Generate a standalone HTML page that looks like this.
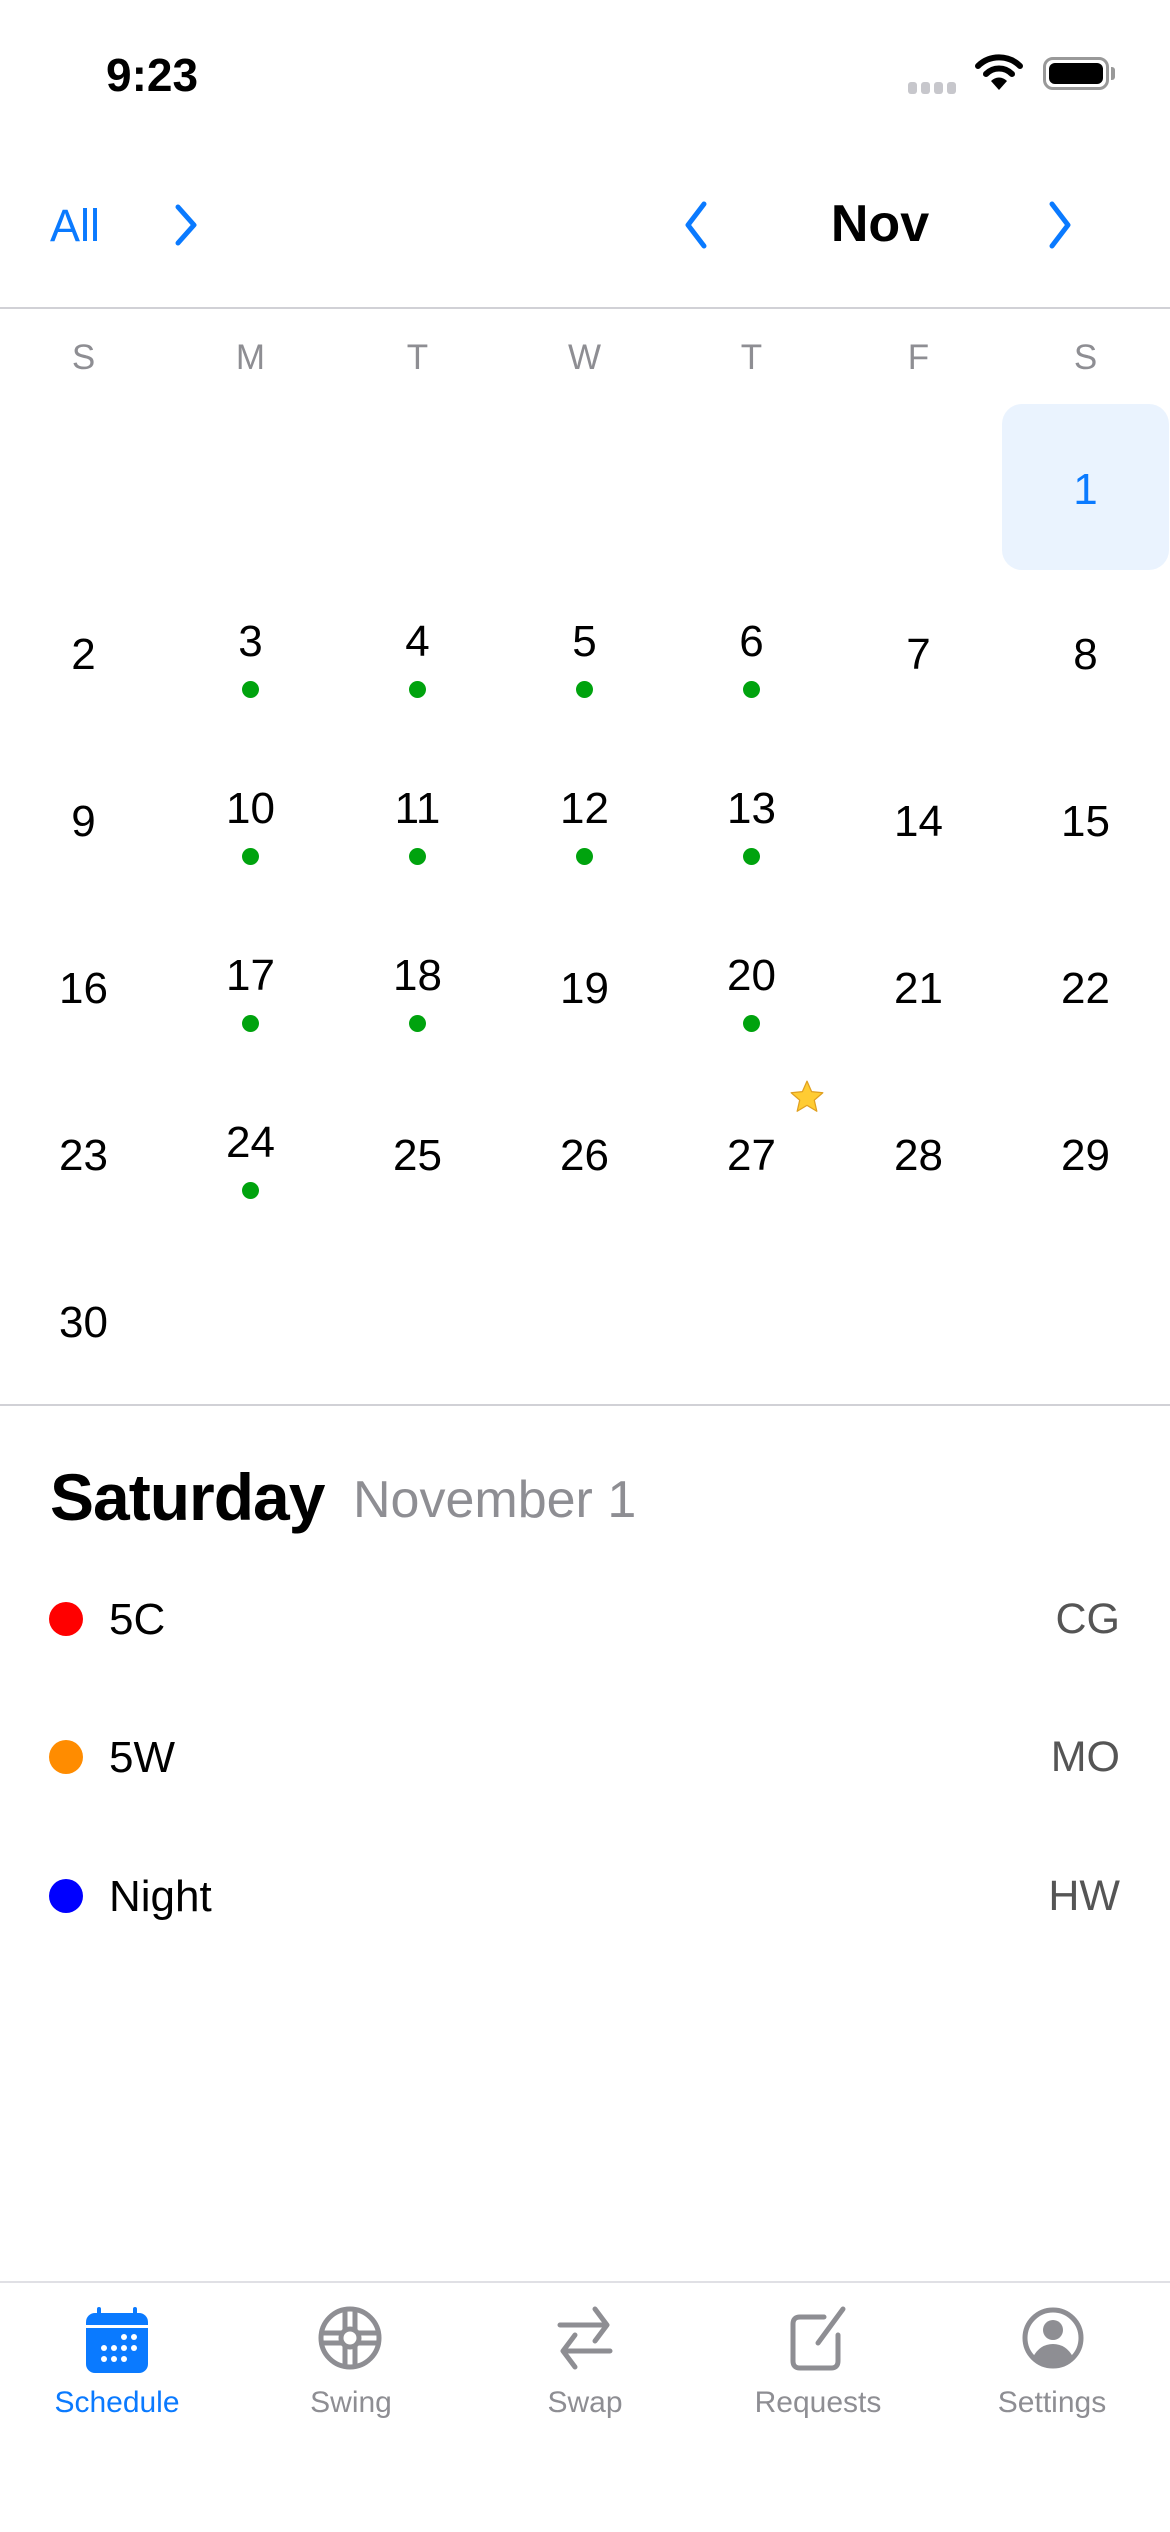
<!DOCTYPE html>
<html><head><meta charset="utf-8"><style>
*{margin:0;padding:0;box-sizing:border-box}
body{width:1170px;height:2532px;background:#fff;position:relative;overflow:hidden;font-family:"Liberation Sans",sans-serif;color:#000}
.a{position:absolute}
.n{position:absolute;width:167px;height:56px;line-height:56px;text-align:center;font-size:44px;margin-top:3px}
.d{position:absolute;width:17px;height:17px;border-radius:50%;background:#00a30e}
.w{position:absolute;width:167px;text-align:center;font-size:35px;color:#8e8e93;top:338px}
.tl{position:absolute;width:234px;text-align:center;font-size:30px;color:#8e8e93;top:2386px}
</style></head><body>
<div class="a" style="left:106px;top:48px;font-size:46px;font-weight:bold;">9:23</div>
<div class="a" style="left:908px;top:82px;display:flex;gap:4px">
<span style="width:9px;height:12px;background:#c7c7cc;border-radius:3px"></span><span style="width:9px;height:12px;background:#c7c7cc;border-radius:3px"></span><span style="width:9px;height:12px;background:#c7c7cc;border-radius:3px"></span><span style="width:9px;height:12px;background:#c7c7cc;border-radius:3px"></span></div>
<svg class="a" style="left:974px;top:52px" width="50" height="40" viewBox="0 0 50 40"><path d="M4 14 A30 30 0 0 1 46 14" stroke="#000" stroke-width="6" fill="none" stroke-linecap="round"/><path d="M12 22 A18 18 0 0 1 38 22" stroke="#000" stroke-width="6" fill="none" stroke-linecap="round"/><path d="M25 38 L17 29 A11 11 0 0 1 33 29 Z" fill="#000"/></svg>
<div class="a" style="left:1043px;top:57px;width:66px;height:33px;border:3px solid #999;border-radius:10px;padding:3px"><div style="width:100%;height:100%;background:#000;border-radius:6px"></div></div>
<div class="a" style="left:1111px;top:67px;width:4px;height:13px;background:#999;border-radius:0 3px 3px 0"></div>

<div class="a" style="left:50px;top:200px;font-size:45px;color:#0a7aff">All</div>
<svg class="a" style="left:172px;top:203px" width="30" height="44" viewBox="0 0 30 44"><path d="M6 4 L22 22 L6 40" stroke="#0a7aff" stroke-width="5" fill="none" stroke-linecap="round" stroke-linejoin="round"/></svg>
<svg class="a" style="left:680px;top:200px" width="30" height="50" viewBox="0 0 30 50"><path d="M24 4 L8 25 L24 46" stroke="#0a7aff" stroke-width="5" fill="none" stroke-linecap="round" stroke-linejoin="round"/></svg>
<div class="a" style="left:780px;width:200px;text-align:center;top:194px;font-size:52px;font-weight:bold">Nov</div>
<svg class="a" style="left:1046px;top:200px" width="30" height="50" viewBox="0 0 30 50"><path d="M6 4 L22 25 L6 46" stroke="#0a7aff" stroke-width="5" fill="none" stroke-linecap="round" stroke-linejoin="round"/></svg>
<div class="a" style="left:0;top:307px;width:1170px;height:2px;background:#d1d1d6"></div>

<div class="w" style="left:0">S</div><div class="w" style="left:167px">M</div><div class="w" style="left:334px">T</div><div class="w" style="left:501px">W</div><div class="w" style="left:668px">T</div><div class="w" style="left:835px">F</div><div class="w" style="left:1002px">S</div>

<div class="a" style="left:1002px;top:404px;width:167px;height:166px;background:#eaf3fe;border-radius:20px"></div>
<div class="n" style="left:1002px;top:459px;color:#0a7aff">1</div>

<div class="n" style="left:0;top:624px">2</div>
<div class="n" style="left:167px;top:611px">3</div><div class="d" style="left:242px;top:681px"></div>
<div class="n" style="left:334px;top:611px">4</div><div class="d" style="left:409px;top:681px"></div>
<div class="n" style="left:501px;top:611px">5</div><div class="d" style="left:576px;top:681px"></div>
<div class="n" style="left:668px;top:611px">6</div><div class="d" style="left:743px;top:681px"></div>
<div class="n" style="left:835px;top:624px">7</div>
<div class="n" style="left:1002px;top:624px">8</div>

<div class="n" style="left:0;top:791px">9</div>
<div class="n" style="left:167px;top:778px">10</div><div class="d" style="left:242px;top:848px"></div>
<div class="n" style="left:334px;top:778px">11</div><div class="d" style="left:409px;top:848px"></div>
<div class="n" style="left:501px;top:778px">12</div><div class="d" style="left:576px;top:848px"></div>
<div class="n" style="left:668px;top:778px">13</div><div class="d" style="left:743px;top:848px"></div>
<div class="n" style="left:835px;top:791px">14</div>
<div class="n" style="left:1002px;top:791px">15</div>

<div class="n" style="left:0;top:958px">16</div>
<div class="n" style="left:167px;top:945px">17</div><div class="d" style="left:242px;top:1015px"></div>
<div class="n" style="left:334px;top:945px">18</div><div class="d" style="left:409px;top:1015px"></div>
<div class="n" style="left:501px;top:958px">19</div>
<div class="n" style="left:668px;top:945px">20</div><div class="d" style="left:743px;top:1015px"></div>
<div class="n" style="left:835px;top:958px">21</div>
<div class="n" style="left:1002px;top:958px">22</div>

<div class="n" style="left:0;top:1125px">23</div>
<div class="n" style="left:167px;top:1112px">24</div><div class="d" style="left:242px;top:1182px"></div>
<div class="n" style="left:334px;top:1125px">25</div>
<div class="n" style="left:501px;top:1125px">26</div>
<div class="n" style="left:668px;top:1125px">27</div>
<svg class="a" style="left:788px;top:1078px" width="38" height="38" viewBox="0 0 24 24"><path d="M12 2 L14.9 8.6 L22 9.3 L16.6 14 L18.2 21 L12 17.3 L5.8 21 L7.4 14 L2 9.3 L9.1 8.6 Z" fill="#ffcc33" stroke="#e0a020" stroke-width="0.8" stroke-linejoin="round"/></svg>
<div class="n" style="left:835px;top:1125px">28</div>
<div class="n" style="left:1002px;top:1125px">29</div>

<div class="n" style="left:0;top:1292px">30</div>
<div class="a" style="left:0;top:1404px;width:1170px;height:2px;background:#d1d1d6"></div>

<div class="a" style="left:50px;top:1459px;font-size:66px;font-weight:bold;letter-spacing:-1px">Saturday</div>
<div class="a" style="left:353px;top:1470px;font-size:52px;color:#8e8e93">November 1</div>

<div class="a" style="left:49px;top:1602px;width:34px;height:34px;border-radius:50%;background:#ff0000"></div>
<div class="a" style="left:109px;top:1595px;font-size:44px">5C</div>
<div class="a" style="right:50px;top:1595px;font-size:43px;color:#555">CG</div>
<div class="a" style="left:49px;top:1740px;width:34px;height:34px;border-radius:50%;background:#ff8c00"></div>
<div class="a" style="left:109px;top:1733px;font-size:44px">5W</div>
<div class="a" style="right:50px;top:1733px;font-size:43px;color:#555">MO</div>
<div class="a" style="left:49px;top:1879px;width:34px;height:34px;border-radius:50%;background:#0000ff"></div>
<div class="a" style="left:109px;top:1872px;font-size:44px">Night</div>
<div class="a" style="right:50px;top:1872px;font-size:43px;color:#555">HW</div>

<div class="a" style="left:0;top:2281px;width:1170px;height:2px;background:#e0e0e5"></div>
<svg class="a" style="left:84px;top:2305px" width="66" height="70" viewBox="0 0 66 70"><rect x="2" y="8" width="62" height="60" rx="9" fill="#0a7aff"/><rect x="2" y="20" width="62" height="3" fill="#fff"/><rect x="13" y="2" width="4" height="10" rx="2" fill="#0a7aff"/><rect x="49" y="2" width="4" height="10" rx="2" fill="#0a7aff"/><g fill="#fff"><circle cx="40" cy="32" r="3"/><circle cx="50" cy="32" r="3"/><circle cx="20" cy="43" r="3"/><circle cx="30" cy="43" r="3"/><circle cx="40" cy="43" r="3"/><circle cx="50" cy="43" r="3"/><circle cx="20" cy="54" r="3"/><circle cx="30" cy="54" r="3"/><circle cx="40" cy="54" r="3"/></g></svg>
<svg class="a" style="left:317px;top:2305px" width="66" height="66" viewBox="0 0 66 66" fill="none" stroke="#8e8e93" stroke-width="5"><circle cx="33" cy="33" r="29"/><circle cx="33" cy="33" r="9"/><path d="M28 5 V25 M38 5 V25 M28 41 V61 M38 41 V61 M5 28 H25 M5 38 H25 M41 28 H61 M41 38 H61"/></svg>
<svg class="a" style="left:555px;top:2305px" width="60" height="66" viewBox="0 0 60 66" fill="none" stroke="#8e8e93" stroke-width="5" stroke-linecap="round" stroke-linejoin="round"><path d="M5 20 H52 M40 4 L52 20 L40 36"/><path d="M55 46 H8 M20 30 L8 46 L20 62"/></svg>
<svg class="a" style="left:788px;top:2305px" width="62" height="66" viewBox="0 0 62 66" fill="none" stroke="#8e8e93" stroke-width="5" stroke-linecap="round"><path d="M36 12 H12 Q5 12 5 19 V56 Q5 63 12 63 H43 Q50 63 50 56 V30"/><path d="M30 38 L55 4"/></svg>
<svg class="a" style="left:1020px;top:2305px" width="66" height="66" viewBox="0 0 66 66"><circle cx="33" cy="33" r="28" fill="none" stroke="#8e8e93" stroke-width="5"/><circle cx="33" cy="25" r="10" fill="#8e8e93"/><path d="M13 52 Q20 39 33 39 Q46 39 53 52 Q44 61 33 61 Q22 61 13 52 Z" fill="#8e8e93"/></svg>
<div class="tl" style="left:0;color:#0a7aff">Schedule</div>
<div class="tl" style="left:234px">Swing</div>
<div class="tl" style="left:468px">Swap</div>
<div class="tl" style="left:701px">Requests</div>
<div class="tl" style="left:935px">Settings</div>
</body></html>
